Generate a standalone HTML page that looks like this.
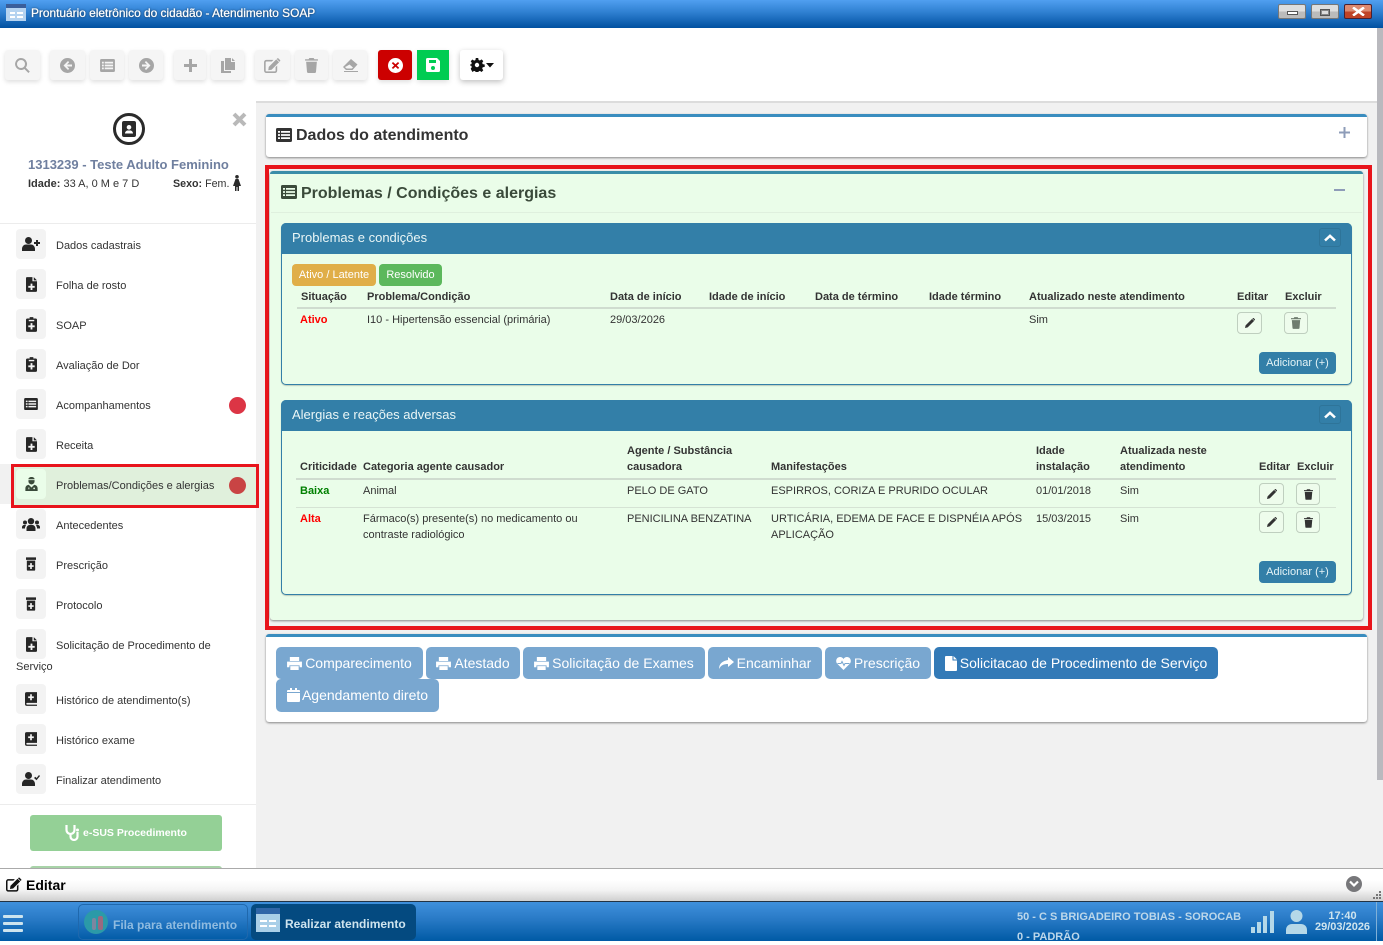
<!DOCTYPE html>
<html lang="pt-BR"><head><meta charset="utf-8"><title>Prontuário eletrônico do cidadão - Atendimento SOAP</title>
<style>
*{box-sizing:border-box}
html,body{margin:0;padding:0;width:1383px;height:941px;overflow:hidden;background:#fff;font-family:"Liberation Sans",Arial,sans-serif;font-size:11px;color:#333}
.a,.t{position:absolute}
.t{white-space:nowrap;line-height:16px;margin-top:1px}
.b{font-weight:700}
.tb{position:absolute;top:50px;height:30px;background:#f5f5f5;border-radius:3px;box-shadow:0 2px 5px rgba(0,0,0,.13);display:flex;align-items:center;justify-content:center}
.tb svg{fill:#a6a6a6}
.ic{position:absolute;left:16px;width:30px;height:30px;background:#f3f3f3;border-radius:4px;display:flex;align-items:center;justify-content:center}
.ic svg{fill:#262626}
.lb{position:absolute;left:56px;white-space:nowrap;line-height:16px;font-size:11px;color:#333;margin-top:1px}
.dot{position:absolute;left:229px;width:17px;height:17px;border-radius:50%;background:#dc3545}
.panel{position:absolute;background:#fff;border-top:3px solid #3a8dbf;border-radius:3px;box-shadow:0 1px 2px rgba(0,0,0,.45)}
.sub{position:absolute;left:281px;width:1071px;background:#eafde9;border:1px solid #337fa8;border-radius:5px;box-shadow:0 1px 1px rgba(0,0,0,.2)}
.subh{position:absolute;left:-1px;top:-1px;width:1071px;height:31px;background:#337fa8;border-radius:5px 5px 0 0;color:#eaf6f6;font-size:13px;line-height:30px;padding-left:11px}
.chev{position:absolute;right:11px;top:5px;width:22px;height:19px;border:1px solid #2e7499;border-radius:3px;display:flex;align-items:center;justify-content:center}
.add{position:absolute;width:77px;height:22px;background:#337fa8;border-radius:4px;color:#e4f3f6;font-size:11px;line-height:22px;text-align:center}
.ib{position:absolute;width:25px;height:22px;border:1px solid #bfcfbf;border-radius:4px;background:#eefcec;display:flex;align-items:center;justify-content:center}
.ib svg{fill:#333}
.bt{position:absolute;height:32px;background:#79a7d0;border-radius:5px;color:#fff;font-size:14px;line-height:16px;white-space:nowrap;display:flex;align-items:center;justify-content:center;gap:3px}
.bt svg{fill:#fff}
.hl{position:absolute;height:2px;background:#cfdccf}
.sl{position:absolute;height:1px;background:#d5e3d4}
</style></head><body>
<svg width="0" height="0" style="position:absolute"><defs>
<symbol id="list" viewBox="0 0 16 14"><path fill-rule="evenodd" d="M1.500 0h13A1.500 1.500 0 0 1 16 1.500v11a1.500 1.500 0 0 1-1.500 1.500h-13A1.500 1.500 0 0 1 0 12.500v-11A1.500 1.500 0 0 1 1.500 0zM2 3v1.800h2V3zm3 0v1.800h9V3zM2 6.100v1.800h2V6.100zm3 0v1.800h9V6.100zM2 9.200v1.800h2V9.200zm3 0v1.800h9V9.200z"/></symbol>
<symbol id="doc" viewBox="0 0 12 16"><path fill-rule="evenodd" d="M1 0h6v4.500h5V15a1 1 0 0 1-1 1H1a1 1 0 0 1-1-1V1a1 1 0 0 1 1-1zm7.500 0L12 3.500H8.500zM5 7v2.500H2.500v2H5V14h2v-2.500h2.500v-2H7V7z"/></symbol>
<symbol id="clip" viewBox="0 0 12 16"><path fill-rule="evenodd" d="M4 0h4v1.500h2.500A1.500 1.500 0 0 1 12 3v11.500a1.500 1.500 0 0 1-1.500 1.500h-9A1.500 1.500 0 0 1 0 14.500V3a1.500 1.500 0 0 1 1.500-1.500H4zM3 3v1.500h6V3zm2 3.500V9H2.500v2H5v2.500h2V11h2.500V9H7V6.500z"/></symbol>
<symbol id="rx" viewBox="0 0 12 16"><path fill-rule="evenodd" d="M0 0h12v3H0zM1 4h10v11a1 1 0 0 1-1 1H2a1 1 0 0 1-1-1zm4 3v2.500H2.800v2H5V14h2v-2.500h2.200v-2H7V7z"/></symbol>
<symbol id="book" viewBox="0 0 14 16"><path fill-rule="evenodd" d="M2 0h12v12.500H2.500a1 1 0 0 0 0 2H14V16H2a2 2 0 0 1-2-2V2a2 2 0 0 1 2-2zm4 2.500V5H3.700v2H6v2.500h2V7h2.300V5H8V2.500z"/></symbol>
<symbol id="userp" viewBox="0 0 18 14"><circle cx="6.500" cy="3.500" r="3.500"/><path d="M0 14v-2c0-2.800 2-4.500 4-4.500h5c2 0 4 1.700 4 4.500v2zM14 3h2v2h2v2h-2v2h-2V7h-2V5h2z"/></symbol>
<symbol id="userc" viewBox="0 0 18 14"><circle cx="6.500" cy="3.500" r="3.500"/><path d="M0 14v-2c0-2.800 2-4.500 4-4.500h5c2 0 4 1.700 4 4.500v2zM12 6l1.300-1.300 1.300 1.300L17 3l1 1-3.500 4.300z"/></symbol>
<symbol id="users" viewBox="0 0 18 13"><circle cx="9" cy="3.200" r="3.200"/><circle cx="3" cy="4.500" r="2"/><circle cx="15" cy="4.500" r="2"/><path d="M4.500 13v-2.500C4.500 8.500 6 7 7.500 7h3c1.500 0 3 1.500 3 3.500V13zM0 10.500V9c0-1 1-2 2-2h2L3 9.500v1zM18 10.500V9c0-1-1-2-2-2h-2l1 2.500v1z"/></symbol>
<symbol id="doctor" viewBox="0 0 14 16"><path fill-rule="evenodd" d="M3.500 2.500C3.500 1 5 0 7 0s3.500 1 3.500 2.500H3.500zM3.500 3.500h7V5a3.500 3.500 0 0 1-7 0zM0 16v-3c0-2.500 2-4 4-4l3 3 3-3c2 0 4 1.500 4 4v3zM3.500 12v2h1v-2zm5.500 1a1 1 0 1 0 2 0 1 1 0 0 0-2 0z"/></symbol>
<symbol id="pencil" viewBox="0 0 12 12"><path d="M0 12l.7-3.200L8.500 1l2.500 2.500-7.800 7.800zM9.300.3a1 1 0 0 1 1.400 0l1 1a1 1 0 0 1 0 1.400l-.3.300L8.900.6z"/></symbol>
<symbol id="trash" viewBox="0 0 12 14"><path d="M4 0h4l.7 1.200H12v1.300H0V1.200h3.300zM1 3.500h10L10.200 13a1 1 0 0 1-1 1H2.800a1 1 0 0 1-1-1z"/></symbol>
<symbol id="edit" viewBox="0 0 18 16"><path d="M2.500 2H10L8.300 3.700H2.500a.8.800 0 0 0-.8.800v9a.8.800 0 0 0 .8.800h9a.8.800 0 0 0 .8-.8V9.700L14 8v5.500a2.500 2.500 0 0 1-2.500 2.500h-9A2.500 2.500 0 0 1 0 13.500v-9A2.500 2.500 0 0 1 2.500 2zM5 9.500L13 1.500l3 3L8 12.500l-3.500.5zM14 .5a1 1 0 0 1 1.400 0l1.600 1.600a1 1 0 0 1 0 1.400l-.5.500-3-3z"/></symbol>
<symbol id="printer" viewBox="0 0 16 14"><path d="M3 0h10v4.300H3zM0 5h16v6h-2.500V9h-11v2H0zM3.500 9.800h9V14h-9z"/></symbol>
</defs></svg>

<!-- title bar -->
<div class="a" style="left:0;top:0;width:1383px;height:28px;background:linear-gradient(#509ff0,#2e7fd0 45%,#0050a0)"></div>
<div class="a" style="left:6px;top:4px;width:20px;height:17px;background:#b5d3f0"></div>
<div class="a" style="left:6px;top:4px;width:20px;height:4px;background:#3a5e9a"></div>
<div class="a" style="left:10px;top:12px;width:5px;height:2px;background:#fff"></div><div class="a" style="left:17px;top:12px;width:6px;height:2px;background:#fff"></div>
<div class="a" style="left:10px;top:16px;width:5px;height:2px;background:#fff"></div><div class="a" style="left:17px;top:16px;width:6px;height:2px;background:#fff"></div>
<div class="t" style="left:31px;top:4px;color:#fff;font-size:11.9px;text-shadow:0 0 2px #123;-webkit-text-stroke:.25px #fff">Prontuário eletrônico do cidadão - Atendimento SOAP</div>
<div class="a" style="left:1278px;top:4px;width:28px;height:15px;background:linear-gradient(#dedede 50%,#bbb 50%);border:1px solid #777;border-radius:2px"><div class="a" style="left:8px;top:6px;width:11px;height:4px;background:#fff;border:1px solid #555"></div></div>
<div class="a" style="left:1311px;top:4px;width:28px;height:15px;background:linear-gradient(#dedede 50%,#bbb 50%);border:1px solid #777;border-radius:2px"><div class="a" style="left:8px;top:4px;width:10px;height:7px;background:#ddd;border:1px solid #555;box-shadow:inset 0 0 0 1px #888"></div></div>
<div class="a" style="left:1344px;top:4px;width:28px;height:15px;background:linear-gradient(#dd8a70 50%,#c04428 50%);border:1px solid #4a2030;border-radius:2px"><svg class="a" style="left:7px;top:2px" width="13" height="9" viewBox="0 0 13 9"><path d="M1 .5L12 8.500M12 .5L1 8.500" stroke="#fff" stroke-width="2.600"/></svg></div>

<!-- toolbar -->
<div class="tb" style="left:5px;width:35px"><svg width="15" height="15" viewBox="0 0 15 15"><path fill-rule="evenodd" d="M6 0a6 6 0 0 1 4.800 9.600l4 4-1.400 1.400-4-4A6 6 0 1 1 6 0zm0 2a4 4 0 1 0 0 8 4 4 0 0 0 0-8z"/></svg></div>
<div class="tb" style="left:50px;width:35px"><svg width="15" height="15" viewBox="0 0 15 15"><path fill-rule="evenodd" d="M7.500 0a7.500 7.500 0 1 1 0 15 7.500 7.500 0 0 1 0-15zM8 3L3.500 7.500 8 12l1.200-1.200L7 8.500h5v-2H7l2.200-2.300z"/></svg></div>
<div class="tb" style="left:90px;width:34px"><svg width="15" height="13"><use href="#list"/></svg></div>
<div class="tb" style="left:129px;width:34px"><svg width="15" height="15" viewBox="0 0 15 15"><path fill-rule="evenodd" d="M7.500 0a7.500 7.500 0 1 1 0 15 7.500 7.500 0 0 1 0-15zM7 3L5.800 4.200 8 6.500H3v2h5l-2.200 2.300L7 12l4.500-4.500z"/></svg></div>
<div class="tb" style="left:174px;width:32px"><svg width="13" height="13" viewBox="0 0 13 13"><path d="M5 0h3v5h5v3H8v5H5V8H0V5h5z"/></svg></div>
<div class="tb" style="left:211px;width:33px"><svg width="14" height="15" viewBox="0 0 14 15"><path d="M4 0h6v4h4v8H4zM11 0l3 3h-3zM0 3h3v10h7v2H0z"/></svg></div>
<div class="tb" style="left:255px;width:35px"><svg width="17" height="15"><use href="#edit"/></svg></div>
<div class="tb" style="left:295px;width:33px"><svg width="13" height="15"><use href="#trash"/></svg></div>
<div class="tb" style="left:333px;width:34px"><svg width="15" height="13" viewBox="0 0 15 13"><path fill-rule="evenodd" d="M8 0l6.500 5.500L9.500 11H3L0 8zM3.600 7.300L1.900 8l1.700 1.500h5.200L10 8.500 6.500 5.500zM1 12h14v1H1z"/></svg></div>
<div class="tb" style="left:378px;width:34px;background:#cc0000"><svg width="15" height="15" viewBox="0 0 15 15" style="fill:#fff"><path fill-rule="evenodd" d="M7.500 0a7.500 7.500 0 1 1 0 15 7.500 7.500 0 0 1 0-15zM5 4L3.800 5.200 6.200 7.500 3.800 9.800 5 11l2.500-2.300L10 11l1.200-1.200-2.400-2.300 2.400-2.300L10 4 7.500 6.300z"/></svg></div>
<div class="tb" style="left:417px;width:32px;background:#00cc52;border-radius:0"><svg width="14" height="14" viewBox="0 0 14 14" style="fill:#fff"><path fill-rule="evenodd" d="M1.500 0H11l3 3v9.500a1.500 1.500 0 0 1-1.500 1.500h-11A1.500 1.500 0 0 1 0 12.500v-11A1.500 1.500 0 0 1 1.500 0zM3 2v3h7V2zm4 6a2 2 0 1 0 0 4 2 2 0 0 0 0-4z"/></svg></div>
<div class="tb" style="left:460px;width:43px;background:#fff;box-shadow:0 2px 6px rgba(0,0,0,.25)"><svg width="24" height="14" viewBox="0 0 24 14" style="fill:#111"><path fill-rule="evenodd" d="M5.800 0h2.400l.4 2 1.300.5 1.700-1.100 1.700 1.700-1.100 1.700.5 1.300 2 .4v2.400l-2 .4-.5 1.300 1.100 1.700-1.700 1.700-1.700-1.100-1.300.5-.4 2H5.800l-.4-2-1.300-.5-1.700 1.100L.7 10.800l1.100-1.700-.5-1.300L0 7.400V6.600l1.300-.4.500-1.300L.7 3.200l1.700-1.700 1.700 1.100 1.300-.5zM7 4.800a2.200 2.200 0 1 0 0 4.400 2.200 2.200 0 0 0 0-4.400zM16 5h8l-4 4.500z"/></svg></div>

<!-- backgrounds -->
<div class="a" style="left:256px;top:101px;width:1127px;height:767px;background:#f1f1f1;border-top:2px solid #dcdcdc"></div>
<div class="a" style="left:1377px;top:28px;width:6px;height:752px;background:#b9b9be"></div>

<!-- sidebar -->
<div class="a" style="left:113px;top:113px;width:32px;height:32px;border:3.500px solid #2b2b2b;border-radius:50%"></div>
<svg class="a" style="left:122px;top:121px" width="14" height="16" viewBox="0 0 14 16"><path fill="#2b2b2b" fill-rule="evenodd" d="M2 0h10a2 2 0 0 1 2 2v12a2 2 0 0 1-2 2H2a2 2 0 0 1-2-2V2a2 2 0 0 1 2-2zm5 4a2.300 2.300 0 1 0 0 4.600A2.300 2.300 0 0 0 7 4zM3 12.500h8c0-1.800-1.500-3-2.500-3h-3c-1 0-2.500 1.200-2.500 3z"/></svg>
<svg class="a" style="left:232px;top:112px" width="15" height="15" viewBox="0 0 15 15"><path d="M2 2L13 13M13 2L2 13" stroke="#b9b9b9" stroke-width="4"/></svg>
<div class="t b" style="left:28px;top:156px;font-size:13px;color:#6f7f9f">1313239 - Teste Adulto Feminino</div>
<div class="t" style="left:28px;top:175px;font-size:11px;color:#333"><b>Idade:</b> 33 A, 0 M e 7 D</div>
<div class="t" style="left:173px;top:175px;font-size:10.7px;color:#333"><b>Sexo:</b> Fem.</div>
<svg class="a" style="left:233px;top:175px" width="8" height="16" viewBox="0 0 8 16"><circle cx="4" cy="1.800" r="1.800" fill="#2b2b2b"/><path fill="#2b2b2b" d="M2.500 4h3L8 11H6v5H4.500v-4h-1v4H2v-5H0z"/></svg>
<div class="a" style="left:0;top:223px;width:256px;height:1px;background:#ececec"></div>

<div class="ic" style="top:229px"><svg width="18" height="14"><use href="#userp"/></svg></div><div class="lb" style="top:237px">Dados cadastrais</div>
<div class="ic" style="top:269px"><svg width="11" height="15"><use href="#doc"/></svg></div><div class="lb" style="top:277px">Folha de rosto</div>
<div class="ic" style="top:309px"><svg width="11" height="15"><use href="#clip"/></svg></div><div class="lb" style="top:317px">SOAP</div>
<div class="ic" style="top:349px"><svg width="11" height="15"><use href="#clip"/></svg></div><div class="lb" style="top:357px">Avaliação de Dor</div>
<div class="ic" style="top:389px"><svg width="14" height="12"><use href="#list"/></svg></div><div class="lb" style="top:397px">Acompanhamentos</div><div class="dot" style="top:397px"></div>
<div class="ic" style="top:429px"><svg width="11" height="15"><use href="#doc"/></svg></div><div class="lb" style="top:437px">Receita</div>

<div class="a" style="left:0;top:464px;width:256px;height:40px;background:#f1f1f1"></div>
<div class="a" style="left:11px;top:464px;width:248px;height:44px;background:#e0f0dc;border:3px solid #e8141c"></div>
<div class="ic" style="top:469px;background:#eafde9"><svg width="13" height="14" style="fill:#3a4a3a"><use href="#doctor"/></svg></div><div class="lb" style="top:477px">Problemas/Condições e alergias</div><div class="dot" style="top:477px;background:#c94444"></div>

<div class="ic" style="top:509px"><svg width="18" height="13"><use href="#users"/></svg></div><div class="lb" style="top:517px">Antecedentes</div>
<div class="ic" style="top:549px"><svg width="10" height="14"><use href="#rx"/></svg></div><div class="lb" style="top:557px">Prescrição</div>
<div class="ic" style="top:589px"><svg width="10" height="14"><use href="#rx"/></svg></div><div class="lb" style="top:597px">Protocolo</div>
<div class="ic" style="top:629px"><svg width="11" height="15"><use href="#doc"/></svg></div><div class="lb" style="top:637px">Solicitação de Procedimento de</div>
<div class="lb" style="top:658px;left:16px">Serviço</div>
<div class="ic" style="top:684px"><svg width="12" height="14"><use href="#book"/></svg></div><div class="lb" style="top:692px">Histórico de atendimento(s)</div>
<div class="ic" style="top:724px"><svg width="12" height="14"><use href="#book"/></svg></div><div class="lb" style="top:732px">Histórico exame</div>
<div class="ic" style="top:764px"><svg width="18" height="14"><use href="#userc"/></svg></div><div class="lb" style="top:772px">Finalizar atendimento</div>
<div class="a" style="left:0;top:804px;width:256px;height:1px;background:#ececec"></div>
<div class="a" style="left:30px;top:815px;width:192px;height:36px;background:#94d096;border-radius:3px"></div>
<svg class="a" style="left:65px;top:824px" width="16" height="17" viewBox="0 0 16 17" fill="none" stroke="#fff" stroke-width="2.200"><path d="M1.500 1v5a4 4 0 0 0 8 0V1M5.500 10v2.500a3.500 3.500 0 0 0 7 0V8"/><circle cx="12.500" cy="6" r="1.500" fill="#fff" stroke="none"/></svg>
<div class="t b" style="left:83px;top:824px;color:#fff;font-size:10.5px">e-SUS Procedimento</div>
<div class="a" style="left:30px;top:866px;width:192px;height:3px;background:#a8d3a8;border-radius:3px 3px 0 0"></div>

<!-- dados do atendimento -->
<div class="panel" style="left:266px;top:114px;width:1101px;height:43px"></div>
<svg class="a" style="left:276px;top:128px;fill:#333" width="16" height="14"><use href="#list"/></svg>
<div class="t b" style="left:296px;top:127px;font-size:16px;color:#333">Dados do atendimento</div>
<svg class="a" style="left:1339px;top:127px" width="11" height="11" viewBox="0 0 11 11"><path d="M4.500 0h2v4.500H11v2H6.500V11h-2V6.500H0v-2h4.500z" fill="#8e9cb8"/></svg>

<!-- problemas -->
<div class="a" style="left:265px;top:165px;width:1107px;height:465px;border:4px solid #e8141c"></div>
<div class="panel" style="left:270px;top:171px;width:1093px;height:449px;background:#eafde9;border-top-color:#3a8da8"></div>
<div class="a" style="left:271px;top:212px;width:1091px;height:1px;background:#dff0de"></div>
<svg class="a" style="left:281px;top:185px;fill:#3a4a3a" width="16" height="14"><use href="#list"/></svg>
<div class="t b" style="left:301px;top:185px;font-size:16px;color:#3a4a3a">Problemas / Condições e alergias</div>
<div class="a" style="left:1334px;top:189px;width:11px;height:2px;background:#8e9cb8"></div>

<div class="sub" style="top:223px;height:162px">
 <div class="subh">Problemas e condições<div class="chev"><svg width="12" height="8" viewBox="0 0 12 8"><path d="M1 6.500L6 1.800l5 4.700" fill="none" stroke="#fff" stroke-width="2.500"/></svg></div></div>
</div>
<div class="a" style="left:292px;top:264px;width:84px;height:22px;background:#e0ae48;border-radius:4px;color:#fff;font-size:11px;line-height:22px;text-align:center">Ativo / Latente</div>
<div class="a" style="left:379px;top:264px;width:63px;height:22px;background:#5cb85c;border-radius:4px;color:#fff;font-size:11px;line-height:22px;text-align:center">Resolvido</div>
<div class="t b" style="left:301px;top:288px">Situação</div>
<div class="t b" style="left:367px;top:288px">Problema/Condição</div>
<div class="t b" style="left:610px;top:288px">Data de início</div>
<div class="t b" style="left:709px;top:288px">Idade de início</div>
<div class="t b" style="left:815px;top:288px">Data de término</div>
<div class="t b" style="left:929px;top:288px">Idade término</div>
<div class="t b" style="left:1029px;top:288px">Atualizado neste atendimento</div>
<div class="t b" style="left:1237px;top:288px">Editar</div>
<div class="t b" style="left:1285px;top:288px">Excluir</div>
<div class="hl" style="left:297px;top:307px;width:1039px"></div>
<div class="t b" style="left:300px;top:311px;color:#f00">Ativo</div>
<div class="t" style="left:367px;top:311px">I10 - Hipertensão essencial (primária)</div>
<div class="t" style="left:610px;top:311px">29/03/2026</div>
<div class="t" style="left:1029px;top:311px">Sim</div>
<div class="ib" style="left:1237px;top:312px"><svg width="10" height="10"><use href="#pencil"/></svg></div>
<div class="ib" style="left:1284px;top:312px;width:24px"><svg width="10" height="12" style="fill:#6f7d6f"><use href="#trash"/></svg></div>
<div class="add" style="left:1259px;top:352px">Adicionar (+)</div>

<div class="sub" style="top:400px;height:195px">
 <div class="subh">Alergias e reações adversas<div class="chev"><svg width="12" height="8" viewBox="0 0 12 8"><path d="M1 6.500L6 1.800l5 4.700" fill="none" stroke="#fff" stroke-width="2.500"/></svg></div></div>
</div>
<div class="t b" style="left:627px;top:442px">Agente / Substância</div>
<div class="t b" style="left:1036px;top:442px">Idade</div>
<div class="t b" style="left:1120px;top:442px">Atualizada neste</div>
<div class="t b" style="left:300px;top:458px">Criticidade</div>
<div class="t b" style="left:363px;top:458px">Categoria agente causador</div>
<div class="t b" style="left:627px;top:458px">causadora</div>
<div class="t b" style="left:771px;top:458px">Manifestações</div>
<div class="t b" style="left:1036px;top:458px">instalação</div>
<div class="t b" style="left:1120px;top:458px">atendimento</div>
<div class="t b" style="left:1259px;top:458px">Editar</div>
<div class="t b" style="left:1297px;top:458px">Excluir</div>
<div class="hl" style="left:296px;top:478px;width:1040px"></div>
<div class="t b" style="left:300px;top:482px;color:#008000">Baixa</div>
<div class="t" style="left:363px;top:482px">Animal</div>
<div class="t" style="left:627px;top:482px">PELO DE GATO</div>
<div class="t" style="left:771px;top:482px">ESPIRROS, CORIZA E PRURIDO OCULAR</div>
<div class="t" style="left:1036px;top:482px">01/01/2018</div>
<div class="t" style="left:1120px;top:482px">Sim</div>
<div class="ib" style="left:1259px;top:483px"><svg width="10" height="10"><use href="#pencil"/></svg></div>
<div class="ib" style="left:1296px;top:483px;width:24px"><svg width="9" height="11"><use href="#trash"/></svg></div>
<div class="sl" style="left:296px;top:507px;width:1040px"></div>
<div class="t b" style="left:300px;top:510px;color:#f00">Alta</div>
<div class="t" style="left:363px;top:510px">Fármaco(s) presente(s) no medicamento ou</div>
<div class="t" style="left:363px;top:526px">contraste radiológico</div>
<div class="t" style="left:627px;top:510px">PENICILINA BENZATINA</div>
<div class="t" style="left:771px;top:510px">URTICÁRIA, EDEMA DE FACE E DISPNÉIA APÓS</div>
<div class="t" style="left:771px;top:526px">APLICAÇÃO</div>
<div class="t" style="left:1036px;top:510px">15/03/2015</div>
<div class="t" style="left:1120px;top:510px">Sim</div>
<div class="ib" style="left:1259px;top:511px"><svg width="10" height="10"><use href="#pencil"/></svg></div>
<div class="ib" style="left:1296px;top:511px;width:24px"><svg width="9" height="11"><use href="#trash"/></svg></div>
<div class="add" style="left:1259px;top:561px">Adicionar (+)</div>

<!-- actions -->
<div class="panel" style="left:266px;top:634px;width:1101px;height:88px"></div>
<div class="bt" style="left:276px;top:647px;width:147px"><svg width="15" height="13"><use href="#printer"/></svg>Comparecimento</div>
<div class="bt" style="left:426px;top:647px;width:94px"><svg width="15" height="13"><use href="#printer"/></svg>Atestado</div>
<div class="bt" style="left:523px;top:647px;width:182px"><svg width="15" height="13"><use href="#printer"/></svg>Solicitação de Exames</div>
<div class="bt" style="left:708px;top:647px;width:114px"><svg width="15" height="12" viewBox="0 0 15 12"><path d="M9 0l6 5-6 5V7C5 7 2 8 0 12c0-5 3-8 9-9z"/></svg>Encaminhar</div>
<div class="bt" style="left:825px;top:647px;width:106px"><svg width="15" height="13" viewBox="0 0 15 13"><path d="M7.500 13L1 6.500C-1 3.500 1 0 4 0c1.500 0 2.700.8 3.500 2C8.300.8 9.500 0 11 0c3 0 5 3.500 3 6.500z"/><path d="M1.500 6.500H5l1-2 2 4 1-2h4.500" fill="none" stroke="#79a7d0" stroke-width="1"/></svg>Prescrição</div>
<div class="bt" style="left:934px;top:647px;width:284px;background:#337ab7"><svg width="12" height="15" viewBox="0 0 12 15"><path d="M1 0h6.500v4.500H12V14a1 1 0 0 1-1 1H1a1 1 0 0 1-1-1V1a1 1 0 0 1 1-1zM8.500 0L12 3.500H8.500z"/></svg>Solicitacao de Procedimento de Serviço</div>
<div class="bt" style="left:276px;top:679px;width:163px;height:33px;padding-bottom:1px;gap:2px"><svg width="13" height="14" viewBox="0 0 13 14"><path d="M0 5h13v8a1 1 0 0 1-1 1H1a1 1 0 0 1-1-1zM1 2h2V0h2v2h3V0h2v2h2a1 1 0 0 1 1 1v1H0V3a1 1 0 0 1 1-1z"/></svg>Agendamento direto</div>

<!-- editar bar -->
<div class="a" style="left:0;top:868px;width:1383px;height:33px;background:linear-gradient(#fff 35%,#f4f4f4 65%,#cfcfcf);border-top:1px solid #aaa"></div>
<svg class="a" style="left:6px;top:877px;fill:#111" width="16" height="15"><use href="#edit"/></svg>
<div class="t b" style="left:26px;top:876px;font-size:14px;color:#000">Editar</div>
<div class="a" style="left:1346px;top:876px;width:16px;height:16px;border-radius:50%;background:#77777a"></div>
<svg class="a" style="left:1349px;top:880px" width="10" height="8" viewBox="0 0 10 8"><path d="M1 1.500l4 4 4-4" fill="none" stroke="#fff" stroke-width="2.200"/></svg>
<svg class="a" style="left:1373px;top:891px" width="8" height="8" viewBox="0 0 8 8" fill="#777"><path d="M6 0h2v2H6zM3 3h2v2H3zM6 3h2v2H6zM0 6h2v2H0zM3 6h2v2H3zM6 6h2v2H6z"/></svg>

<!-- taskbar -->
<div class="a" style="left:0;top:901px;width:1383px;height:40px;background:linear-gradient(#3f90dc,#2b7cc8 40%,#005aa5);border-top:1px solid #234"></div>
<div class="a" style="left:3px;top:915px;width:20px;height:3px;background:#cde4ee;border-radius:1px"></div>
<div class="a" style="left:3px;top:922px;width:20px;height:3px;background:#cde4ee;border-radius:1px"></div>
<div class="a" style="left:3px;top:929px;width:20px;height:3px;background:#cde4ee;border-radius:1px"></div>
<div class="a" style="left:78px;top:904px;width:170px;height:36px;border:1px solid #1f68ad;border-radius:5px"></div>
<div class="a" style="left:84px;top:910px;width:24px;height:24px;border-radius:50%;background:#2b9aa8"></div>
<div class="a" style="left:92px;top:918px;width:4px;height:12px;background:#7c86a0;border-radius:2px"></div><div class="a" style="left:98px;top:916px;width:5px;height:14px;background:#9a6a80;border-radius:2px"></div>
<div class="t b" style="left:113px;top:916px;color:#8fbbe0;font-size:12px">Fila para atendimento</div>
<div class="a" style="left:251px;top:904px;width:165px;height:36px;background:#044a80;border-radius:5px"></div>
<div class="a" style="left:256px;top:908px;width:24px;height:24px;background:#a9cfe8"></div>
<div class="a" style="left:256px;top:908px;width:24px;height:6px;background:#2f66a8"></div>
<div class="a" style="left:260px;top:920px;width:7px;height:2px;background:#fff"></div><div class="a" style="left:269px;top:920px;width:7px;height:2px;background:#fff"></div>
<div class="a" style="left:260px;top:925px;width:7px;height:2px;background:#fff"></div><div class="a" style="left:269px;top:925px;width:7px;height:2px;background:#fff"></div>
<div class="t b" style="left:285px;top:915px;color:#cfe4ee;font-size:12px">Realizar atendimento</div>
<div class="t b" style="left:1017px;top:908px;color:#bcd7ea;font-size:11px">50 - C S BRIGADEIRO TOBIAS - SOROCAB</div>
<div class="t b" style="left:1017px;top:928px;color:#bcd7ea;font-size:11px">0 - PADRÃO</div>
<div class="a" style="left:1251px;top:927px;width:4px;height:6px;background:#b5d8e8"></div>
<div class="a" style="left:1257px;top:922px;width:4px;height:11px;background:#b5d8e8"></div>
<div class="a" style="left:1263px;top:916px;width:4px;height:17px;background:#b5d8e8"></div>
<div class="a" style="left:1270px;top:911px;width:4px;height:22px;background:#b5d8e8"></div>
<svg class="a" style="left:1286px;top:910px" width="21" height="24" viewBox="0 0 21 24"><circle cx="10.500" cy="6" r="6" fill="#b5d8e8"/><path d="M0 24v-4c0-4 3-6 6-6h9c3 0 6 2 6 6v4z" fill="#b5d8e8"/></svg>
<div class="t b" style="left:1315px;top:910px;width:55px;text-align:center;color:#cfe4ee;font-size:11px;line-height:11px;white-space:normal">17:40<br>29/03/2026</div>
<div class="a" style="left:1376px;top:902px;width:1px;height:39px;background:#7fb0d8"></div>
</body></html>
